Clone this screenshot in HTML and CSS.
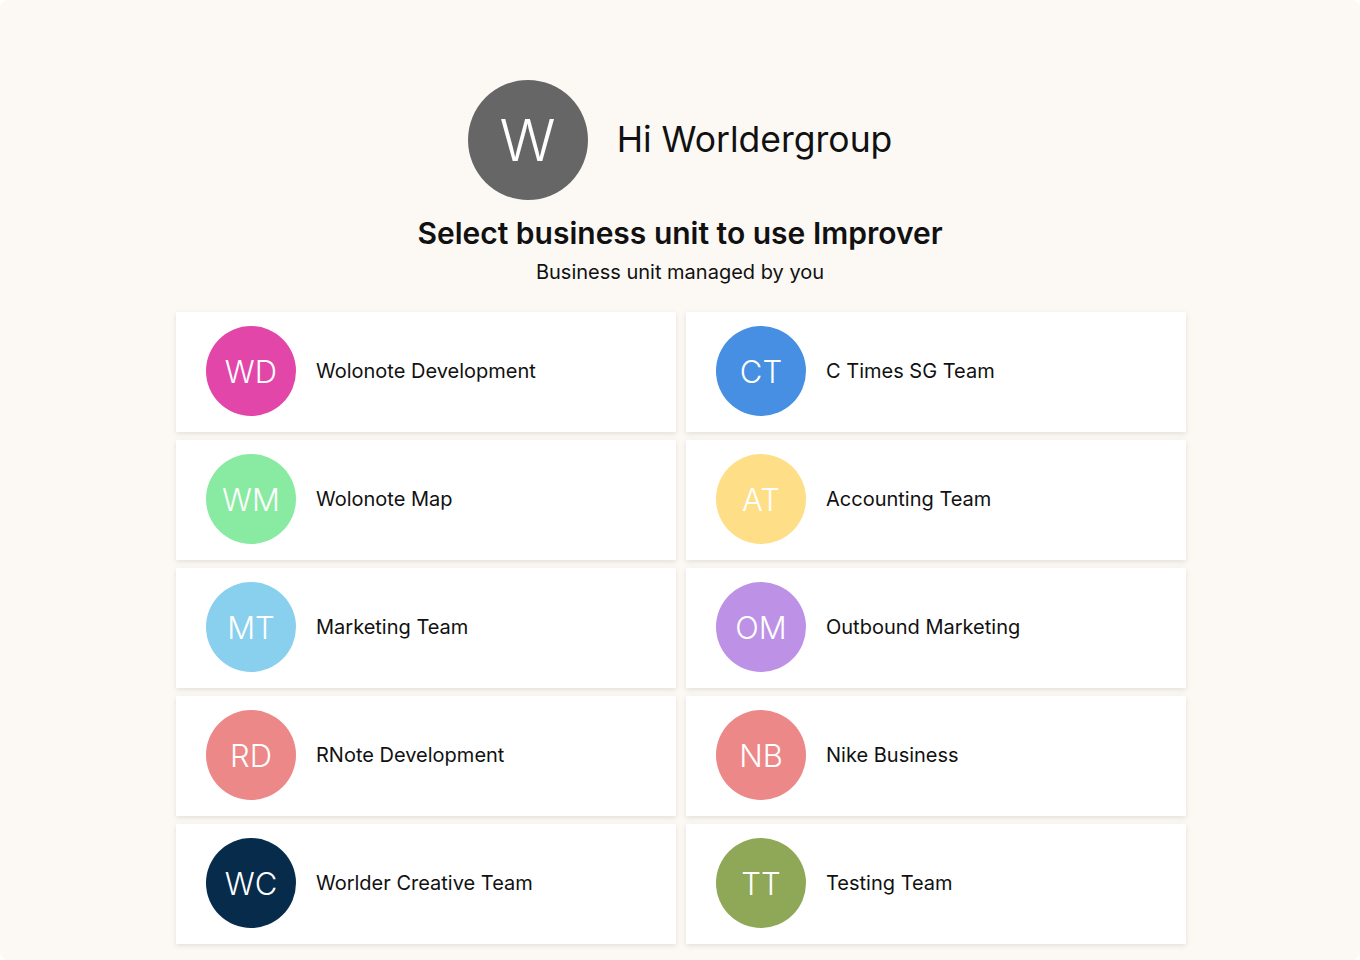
FILE: index.html
```html
<!DOCTYPE html>
<html>
<head>
    <meta charset="UTF-8">
    <title>Select business unit</title>
    <link rel="stylesheet" href="styles.css">
</head>
<body>
    <div class="page">
        <div class="greeting">
            <div class="avatar avatar-lg">W</div>
            <h1>Hi Worldergroup</h1>
        </div>
        <h2 class="title">Select business unit to use Improver</h2>
        <p class="subtitle">Business unit managed by you</p>
        <div class="units">
            <div class="unit"><div class="avatar c-pink">WD</div><span>Wolonote Development</span></div>
            <div class="unit"><div class="avatar c-blue">CT</div><span>C Times SG Team</span></div>
            <div class="unit"><div class="avatar c-green">WM</div><span>Wolonote Map</span></div>
            <div class="unit"><div class="avatar c-yellow">AT</div><span>Accounting Team</span></div>
            <div class="unit"><div class="avatar c-sky">MT</div><span>Marketing Team</span></div>
            <div class="unit"><div class="avatar c-purple">OM</div><span>Outbound Marketing</span></div>
            <div class="unit"><div class="avatar c-salmon">RD</div><span>RNote Development</span></div>
            <div class="unit"><div class="avatar c-salmon">NB</div><span>Nike Business</span></div>
            <div class="unit"><div class="avatar c-navy">WC</div><span>Worlder Creative Team</span></div>
            <div class="unit"><div class="avatar c-olive">TT</div><span>Testing Team</span></div>
        </div>
    </div>
</body>
</html>
```

FILE: styles.css
```css
html{
    background:#ffffff;
}
body{
    margin:0;
    font-family:Inter, "Noto Sans", sans-serif;
    color:#111;
}
.page{
    height:960px;
    box-sizing:border-box;
    padding-top:80px;
    background:#fcf9f5;
    border-radius:8px;
    display:flex;
    flex-direction:column;
    align-items:center;
    overflow:hidden;
}
.greeting{
    display:flex;
    align-items:center;
    gap:29px;
}
.greeting h1{
    margin:0;
    font-size:35.5px;
    font-weight:400;
    line-height:44px;
    color:#111;
}
.avatar{
    width:90px;
    height:90px;
    border-radius:50%;
    flex-shrink:0;
    display:flex;
    align-items:center;
    justify-content:center;
    color:#fff;
    font-size:31px;
    font-weight:300;
}
.avatar-lg{
    width:120px;
    height:120px;
    font-size:58px;
    background:#666666;
}
.title{
    margin:15px 0 0;
    font-size:30px;
    line-height:36px;
    font-weight:600;
}
.subtitle{
    margin:9px 0 0;
    font-size:20px;
    line-height:24px;
}
.units{
    margin-top:28px;
    display:grid;
    grid-template-columns:500px 500px;
    grid-auto-rows:120px;
    column-gap:10px;
    row-gap:8px;
    padding-left:2px;
}
.unit{
    background:#fff;
    display:flex;
    align-items:center;
    gap:20px;
    padding:0 0 2px 30px;
    box-shadow:0 2px 5px rgba(60,40,20,0.12);
    font-size:20px;
}
.c-pink{ background:#e246a8; }
.c-blue{ background:#468fe2; }
.c-green{ background:#89eba1; }
.c-yellow{ background:#fede87; }
.c-sky{ background:#89cfee; }
.c-purple{ background:#bd92e6; }
.c-salmon{ background:#ec8888; }
.c-navy{ background:#062b4b; }
.c-olive{ background:#8fa857; }
```
